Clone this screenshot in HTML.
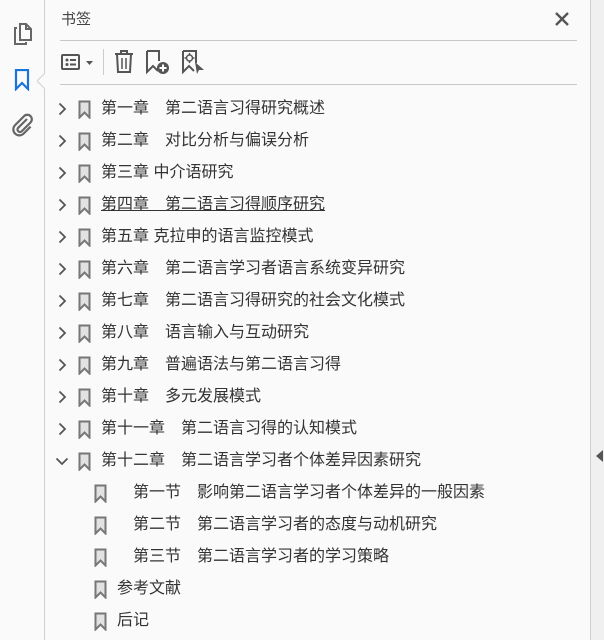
<!DOCTYPE html>
<html><head><meta charset="utf-8"><style>
*{margin:0;padding:0;box-sizing:border-box}
body{width:604px;height:640px;overflow:hidden;background:#fafafa;font-family:"Liberation Sans","Noto Sans CJK SC",sans-serif;position:relative;color:#333}
.rail{position:absolute;left:0;top:0;width:45px;height:640px;background:#fafafa;border-right:1px solid #cfcfcf}
.notch{position:absolute;left:37px;top:73px}
.title{position:absolute;left:61px;top:8px;font-size:15px;color:#444}
.close{position:absolute;left:554px;top:11px}
.hr{position:absolute;left:60px;width:517px;height:1px;background:#c8c8c8}
.row{position:absolute;height:32px;font-size:16px;line-height:32px;white-space:pre;color:#333}
.row svg{position:absolute}
.rstrip{position:absolute;left:590px;top:0;width:14px;height:640px;background:#f0f0f0;border-left:1px solid #cfcfcf}
</style></head><body>
<div class="rail">
<svg style="position:absolute;left:12px;top:22px" width="22" height="24" viewBox="0 0 22 24"><path d="M8 2h6l5 5v11H8z" fill="none" stroke="#666" stroke-width="2"/><path d="M14 2v5h5" fill="none" stroke="#666" stroke-width="2"/><path d="M5 6H3v16h11v-2" fill="none" stroke="#666" stroke-width="2"/></svg>
<svg style="position:absolute;left:14px;top:69px" width="16" height="22" viewBox="0 0 16 22"><path d="M2 1h12v19l-6-6-6 6z" fill="none" stroke="#1a73d9" stroke-width="2.2" stroke-linejoin="miter"/></svg>
<svg style="position:absolute;left:11px;top:113px" width="24" height="24" viewBox="0 0 24 24"><path d="M16 6l-9 9a2.5 2.5 0 0 0 3.5 3.5l9-9a4.5 4.5 0 0 0-6.4-6.4l-9 9a6 6 0 0 0 8.5 8.5l7-7" fill="none" stroke="#666" stroke-width="2.2"/></svg>
</div>
<svg class="notch" width="9" height="16" viewBox="0 0 9 16"><path d="M8 0L0 8l8 8" fill="#fafafa" stroke="#cfcfcf"/><rect x="8" y="0" width="2" height="16" fill="#fafafa"/></svg>
<div class="title">书签</div>
<svg class="close" width="16" height="16" viewBox="0 0 16 16"><path d="M2 2l12 12M14 2L2 14" stroke="#555" stroke-width="2.4"/></svg>
<div class="hr" style="top:40px"></div>
<div class="hr" style="top:84px"></div>
<svg style="position:absolute;left:60px;top:52px" width="40" height="22" viewBox="0 0 40 22"><rect x="2" y="3" width="17" height="14" rx="1" fill="none" stroke="#555" stroke-width="2"/><circle cx="7" cy="8" r="1.5" fill="#555"/><circle cx="7" cy="12.5" r="1.5" fill="#555"/><path d="M10 8h6M10 12.5h6" stroke="#555" stroke-width="2"/><path d="M26 9h7l-3.5 4z" fill="#555"/></svg>
<div style="position:absolute;left:103px;top:49px;width:1px;height:26px;background:#ccc"></div>
<svg style="position:absolute;left:112px;top:49px" width="24" height="26" viewBox="0 0 24 26"><path d="M3 5h18M9 5V2h6v3M5 5l1 18h12l1-18" fill="none" stroke="#555" stroke-width="2"/><path d="M10 9v11M14 9v11" stroke="#555" stroke-width="1.5"/></svg>
<svg style="position:absolute;left:145px;top:49px" width="26" height="27" viewBox="0 0 26 27"><path d="M2 2h12v10M14 17l0 0M2 2v21l6-6 5 5" fill="none" stroke="#555" stroke-width="2"/><circle cx="18" cy="19" r="6" fill="#555"/><path d="M18 15.5v7M14.5 19h7" stroke="#fff" stroke-width="2"/></svg>
<svg style="position:absolute;left:181px;top:49px" width="26" height="27" viewBox="0 0 26 27"><path d="M2 2h13v12M2 2v21l6-6 5 5" fill="none" stroke="#555" stroke-width="2"/><circle cx="8.5" cy="9" r="3" fill="none" stroke="#555" stroke-width="1.5"/><path d="M8.5 4v2M8.5 12v2M3.5 9h2M11.5 9h2" stroke="#555" stroke-width="1.5"/><path d="M14 13l9 8h-5l-2 4z" fill="#555"/></svg>

<div id="rows"></div>
<div class="rstrip"><svg style="position:absolute;left:5px;top:450px" width="7" height="12" viewBox="0 0 7 12"><path d="M7 0L0 6l7 6z" fill="#555"/></svg></div>
<script>
var items=[
[1,"第一章　第二语言习得研究概述"],[1,"第二章　对比分析与偏误分析"],[1,"第三章 中介语研究"],[1,"第四章　第二语言习得顺序研究",0,1],[1,"第五章 克拉申的语言监控模式"],[1,"第六章　第二语言学习者语言系统变异研究"],[1,"第七章　第二语言习得研究的社会文化模式"],[1,"第八章　语言输入与互动研究"],[1,"第九章　普遍语法与第二语言习得"],[1,"第十章　多元发展模式"],[1,"第十一章　第二语言习得的认知模式"],[2,"第十二章　第二语言学习者个体差异因素研究"],
[0,"　第一节　影响第二语言学习者个体差异的一般因素"],[0,"　第二节　第二语言学习者的态度与动机研究"],[0,"　第三节　第二语言学习者的学习策略"],[0,"参考文献"],[0,"后记"]];
var h="";
items.forEach(function(it,i){
var top=93+i*32, sub=it[0]==0, bx=sub?94:78, tx=sub?117:101;
h+='<div class="row" style="left:0;top:'+top+'px;width:590px">';
if(it[0]==1)h+='<svg style="left:58px;top:9px" width="9" height="14" viewBox="0 0 9 14"><path d="M1.5 1.5l5.5 5.5-5.5 5.5" fill="none" stroke="#555" stroke-width="1.8"/></svg>';
if(it[0]==2)h+='<svg style="left:55px;top:12px" width="14" height="9" viewBox="0 0 14 9"><path d="M1.5 1.5l5.5 5.5 5.5-5.5" fill="none" stroke="#555" stroke-width="1.8"/></svg>';
h+='<svg style="left:'+bx+'px;top:7px" width="13" height="19" viewBox="0 0 13 19"><path d="M1.5 1.5h10v16l-5-5-5 5z" fill="#e2e2e2" stroke="#777" stroke-width="2"/></svg>';
h+='<span style="position:absolute;left:'+tx+'px;'+(it[3]?'text-decoration:underline;':'')+'">'+it[1]+'</span></div>';
});
document.getElementById("rows").innerHTML=h;
</script>
</body></html>
